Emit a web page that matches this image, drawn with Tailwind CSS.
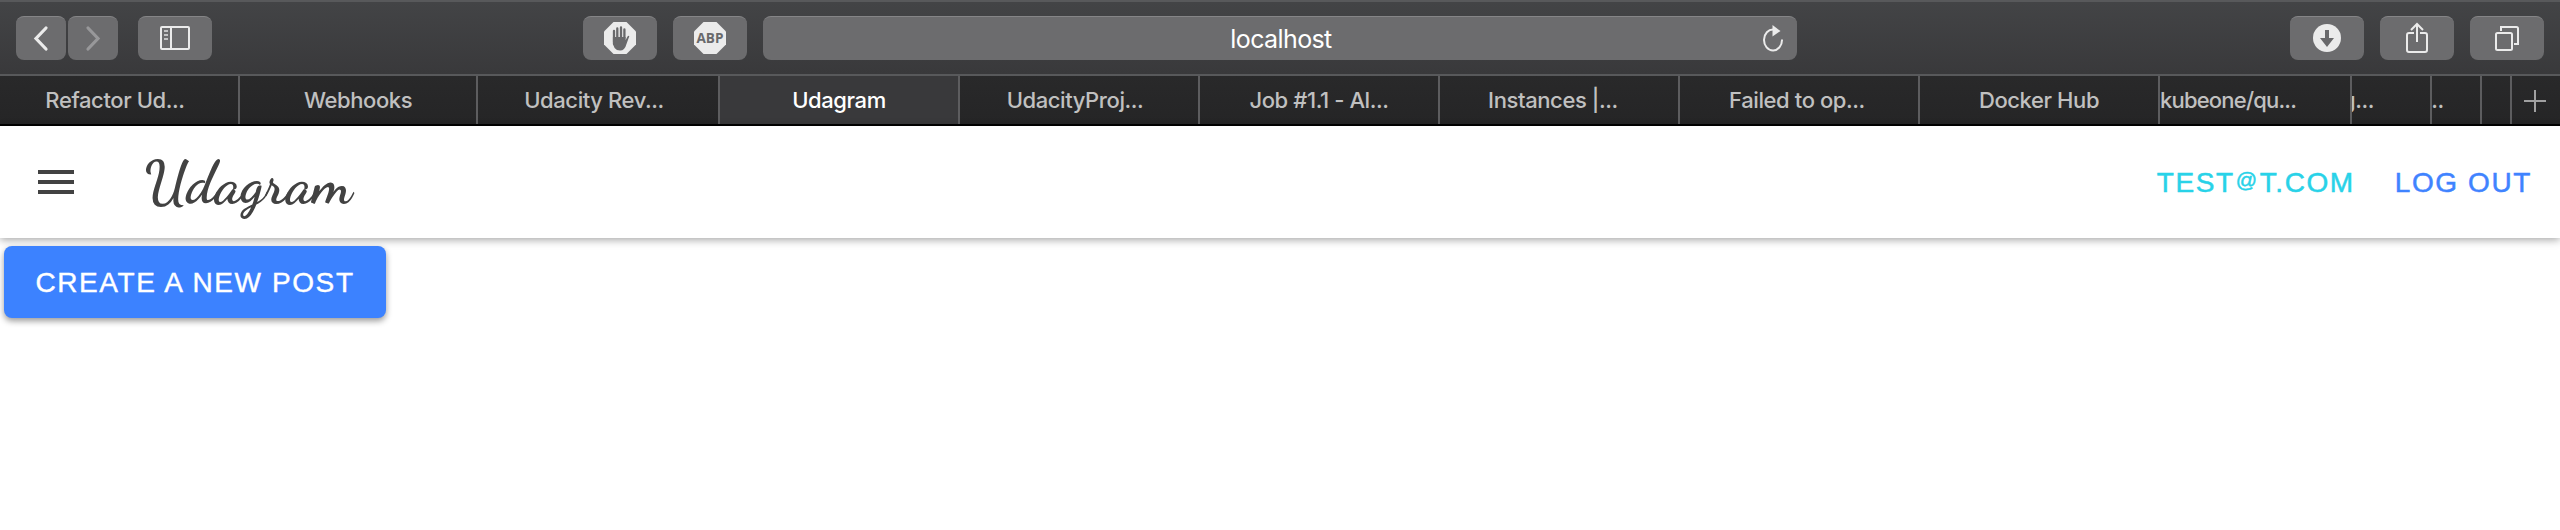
<!DOCTYPE html>
<html lang="en">
<head>
<meta charset="utf-8">
<title>Udagram</title>
<script src="https://cdn.jsdelivr.net/npm/@tailwindcss/browser@4"></script>
</head>
<body class="h-[530px] overflow-hidden bg-white font-['Inter',sans-serif]">
<div class="flex h-[126px] flex-col border-b-2 border-black">
  <div class="flex h-[76px] items-start border-y-2 border-[#58595b] bg-linear-to-b from-[#434446] to-[#39393b] pt-[14px] pr-4 pl-4 text-[#ebebeb]">
    <div class="flex gap-0.5">
      <button class="h-11 w-[50px] rounded-lg border-t border-[#858587] bg-[#6c6c6e]"><svg class="block" width="50" height="43" viewBox="0 0 50 43" fill="none" stroke="currentColor" stroke-width="3.2" stroke-linecap="round"><path d="M30 11 20 21.500 30 32"/></svg></button>
      <button class="h-11 w-[50px] rounded-lg border-t border-[#858587] bg-[#6c6c6e] text-[#98989a]"><svg class="block" width="50" height="43" viewBox="0 0 50 43" fill="none" stroke="currentColor" stroke-width="3.2" stroke-linecap="round"><path d="M20 11 30 21.500 20 32"/></svg></button>
    </div>
    <button class="ml-5 h-11 w-[74px] rounded-lg border-t border-[#858587] bg-[#6c6c6e]"><svg class="block" width="74" height="43" viewBox="0 0 74 43" fill="none" stroke="currentColor" stroke-width="2"><rect x="23" y="10" width="28" height="22" rx="1"/><path d="M33 10v22"/><path d="M26 14h4M26 18h4M26 22h4" stroke="#c4c4c5"/></svg></button>
    <button class="ml-[371px] h-11 w-[74px] rounded-lg border-t border-[#858587] bg-[#6c6c6e]"><svg class="block" width="74" height="43" viewBox="0 0 74 43"><path d="M30.500 5h13l9.500 9.500v13L43.500 37h-13L21 27.500v-13Z" fill="#ebebeb"/><path d="M31 27V14M34.300 21V11.500M38 21V10.500M41.400 21V12.500" stroke="#69696b" stroke-width="2.300" stroke-linecap="round"/><path d="M29.900 20h12.600l.2 3 1.800-3.500q1.300-1.500 1.800-.3l-3 8.300q-1.500 6-6.200 6-7.200 0-7.200-9Z" fill="#69696b"/></svg></button>
    <button class="ml-4 h-11 w-[74px] rounded-lg border-t border-[#858587] bg-[#6c6c6e]"><svg class="block" width="74" height="43" viewBox="0 0 74 43"><path d="M30.500 5h13l9.500 9.500v13L43.500 37h-13L21 27.500v-13Z" fill="#ebebeb"/><text x="37" y="26" text-anchor="middle" textLength="27" lengthAdjust="spacingAndGlyphs" font-family="Open Sans" font-weight="700" font-size="15" fill="#69696b">ABP</text></svg></button>
    <div class="ml-4 flex h-11 w-[1034px] items-center rounded-lg border-t border-[#858587] bg-[#6c6c6e] pr-2">
      <span class="flex-1 pl-[42px] pt-px text-center text-[25px] leading-[43px] tracking-[-0.6px] text-white">localhost</span>
      <svg width="32" height="43" viewBox="0 0 32 43"><path d="M16.500 12.500A9 10.500 0 1 0 25 22.500" fill="none" stroke="#ebebeb" stroke-width="2"/><path d="M15.500 8v11.500l8-5.500Z" fill="#ebebeb"/></svg>
    </div>
    <div class="ml-auto flex gap-4">
      <button class="h-11 w-[74px] rounded-lg border-t border-[#858587] bg-[#6c6c6e]"><svg class="block" width="74" height="43" viewBox="0 0 74 43"><circle cx="37" cy="21" r="14" fill="#ebebeb"/><path d="M35 13h4v8h5l-7 9-7-9h5Z" fill="#69696b"/></svg></button>
      <button class="h-11 w-[74px] rounded-lg border-t border-[#858587] bg-[#6c6c6e]"><svg class="block" width="74" height="43" viewBox="0 0 74 43" fill="none" stroke="currentColor" stroke-width="2"><path d="M34 16h-5q-2 0-2 2v15q0 2 2 2h16q2 0 2-2V18q0-2-2-2h-5M37 25V7M31 13l6-6 6 6"/></svg></button>
      <button class="h-11 w-[74px] rounded-lg border-t border-[#858587] bg-[#6c6c6e]"><svg class="block" width="74" height="43" viewBox="0 0 74 43" fill="none" stroke="currentColor" stroke-width="2"><rect x="26" y="16" width="16" height="17" rx="1.500"/><path d="M31 14v-4h15.500q1.500 0 1.500 1.500V27h-4"/></svg></button>
    </div>
  </div>
  <div class="flex h-12 bg-linear-to-b from-[#29292a] to-[#252526] text-[22px] leading-[48px] font-medium tracking-[-0.4px] whitespace-nowrap text-[#c0c0c0] *:box-border *:overflow-hidden *:border-r-2 *:border-[#5d5d5f] *:text-center">
    <div class="w-60 pr-2">Refactor Ud...</div>
    <div class="w-[238px]">Webhooks</div>
    <div class="w-[242px] pr-2">Udacity Rev...</div>
    <div class="w-60 bg-[#39393b] text-white">Udagram</div>
    <div class="w-60 pr-2">UdacityProj...</div>
    <div class="w-60">Job #1.1 - Al...</div>
    <div class="w-60 pr-3">Instances |...</div>
    <div class="w-60 pr-1">Failed to op...</div>
    <div class="w-60">Docker Hub</div>
    <div class="flex w-48 tracking-[-0.8px]">kubeone/qu...</div>
    <div class="flex w-20"><span class="-ml-[10px]">g...</span></div>
    <div class="flex w-[50px]"><span class="-ml-[7px]">...</span></div>
    <div class="w-[30px]"></div>
    <div class="flex-1 border-r-0!"><svg class="block" width="48" height="48" viewBox="0 0 48 48"><path d="M12 25h22M23 14v22" stroke="#a0a0a1" stroke-width="2"/></svg></div>
  </div>
</div>
<header class="relative flex h-28 items-center bg-white pr-7 pl-[38px] font-['Liberation_Sans',sans-serif] text-[28px] tracking-[1.6px] shadow-[0_2px_8px_rgba(0,0,0,.35)]">
  <svg width="36" height="24" viewBox="0 0 36 24" fill="#424242"><path d="M0 0h36v4H0zM0 10h36v4H0zM0 20h36v4H0z"/></svg>
  <h1 class="ml-[70px] pt-0.5 font-['Dancing_Script','Liberation_Serif',cursive] text-[59px] leading-none font-bold tracking-normal text-[#424242]">Udagram</h1>
  <a class="ml-auto pt-0.5 text-[#28d2e8] [-webkit-text-stroke:0.5px]">TEST<span class="mx-px align-[5px] text-[21px] leading-none">@</span>T.COM</a>
  <a class="ml-10 pt-0.5 text-[#3f83ff] [-webkit-text-stroke:0.5px]">LOG OUT</a>
</header>
<main class="px-1 pt-2">
  <button class="relative h-[72px] w-[382px] rounded-lg bg-[#3c82ff] pt-0.5 font-['Liberation_Sans',sans-serif] text-[28px] tracking-[1.6px] text-white shadow-[0_3px_6px_rgba(0,0,0,.4)] [-webkit-text-stroke:0.4px]">CREATE A NEW POST</button>
</main>
</body>
</html>
